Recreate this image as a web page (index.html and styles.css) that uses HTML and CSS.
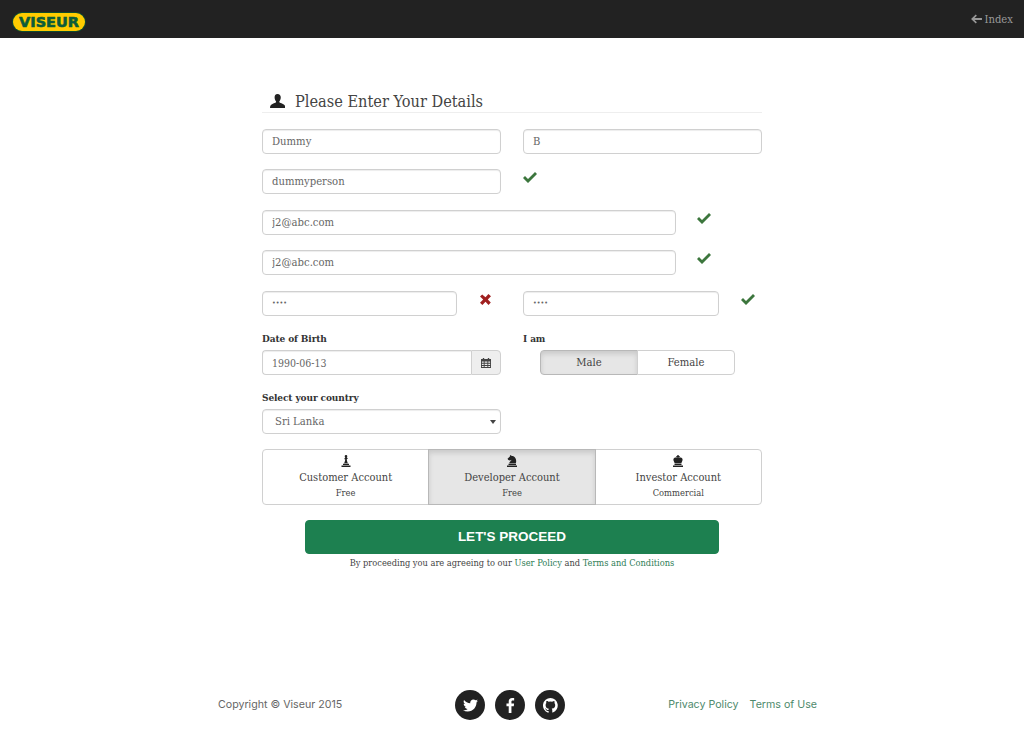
FILE: index.html
```html
<!DOCTYPE html>
<html lang="en">
<head>
<meta charset="utf-8">
<title>Viseur</title>
<link rel="stylesheet" href="styles.css">
</head>
<body>
<header class="topbar">
  <a class="logo"><span class="logo-text">VISEUR</span></a>
  <a class="index-link">
    <svg class="arrow" viewBox="0 0 12 11"><path d="M0 5.500 5.200.6 6.400 1.800 3.800 4.300H12v2.400H3.800l2.600 2.500-1.200 1.200z"/></svg>Index
  </a>
</header>
<main class="form">
  <h1 class="title">
    <svg class="user" viewBox="0 0 16 15"><path d="M8 0c2.300 0 3.500 1.600 3.500 3.800 0 1.500-.6 3-1.400 4-.4.6-.2 1.300.5 1.600 2.200.9 4.600 1.500 5.400 3.200.3.700.4 1.500.4 2.400H0c0-.9.100-1.700.4-2.400.8-1.700 3.200-2.300 5.400-3.200.7-.3.900-1 .5-1.600-.8-1-1.400-2.500-1.400-4C4.900 1.600 5.700 0 8 0z"/></svg>
    <span>Please Enter Your Details</span>
  </h1>
  <div class="row two">
    <input class="field" type="text" value="Dummy">
    <input class="field" type="text" value="B">
  </div>
  <div class="row two">
    <input class="field" type="text" value="dummyperson">
    <svg class="ok" viewBox="0 0 14 11"><path d="M0 6 2 4l3 3 7-7 2 2-9 9z"/></svg>
  </div>
  <div class="row wide">
    <input class="field" type="text" value="j2@abc.com">
    <svg class="ok" viewBox="0 0 14 11"><path d="M0 6 2 4l3 3 7-7 2 2-9 9z"/></svg>
  </div>
  <div class="row wide">
    <input class="field" type="text" value="j2@abc.com">
    <svg class="ok" viewBox="0 0 14 11"><path d="M0 6 2 4l3 3 7-7 2 2-9 9z"/></svg>
  </div>
  <div class="row passwords">
    <input class="field pw" type="password" value="1234">
    <svg class="bad" viewBox="0 0 11 11"><path d="M2.200.4 5.500 3.300 8.400 0 11 2.200 7.800 5.500 10.800 8.600 8.500 11 5.500 7.800 2.400 11 0 8.700 3.200 5.500 0 2.400z"/></svg>
    <input class="field pw" type="password" value="1234">
    <svg class="ok" viewBox="0 0 14 11"><path d="M0 6 2 4l3 3 7-7 2 2-9 9z"/></svg>
  </div>
  <div class="row two labelled">
    <div>
      <label class="label">Date of Birth</label>
      <div class="date-group">
        <input class="field date" type="text" value="1990-06-13">
        <span class="addon">
          <svg class="cal" viewBox="0 0 11 11"><path d="M2 0h1.500v1.200h4V0H9v1.200h2V11H0V1.200h2zM1 3.800v1.500h2V3.800zm3 0v1.500h3V3.800zm4 0v1.500h2V3.800zM1 6.200v1.600h2V6.200zm3 0v1.600h3V6.200zm4 0v1.600h2V6.200zM1 8.700v1.300h2V8.700zm3 0v1.300h3V8.700zm4 0v1.300h2V8.700z" fill-rule="evenodd"/></svg>
        </span>
      </div>
    </div>
    <div>
      <label class="label">I am</label>
      <div class="gender">
        <button class="seg active" type="button">Male</button>
        <button class="seg" type="button">Female</button>
      </div>
    </div>
  </div>
  <div class="row two labelled last">
    <div>
      <label class="label">Select your country</label>
      <div class="select-wrap">
        <select class="field country"><option>Sri Lanka</option></select>
      </div>
    </div>
  </div>
  <div class="accounts">
    <div class="account">
      <svg class="piece" viewBox="0 0 12 12"><path d="M6 0a1.300 1.300 0 0 1 1.300 1.300c0 .5-.3.9-.6 1.100L8 3.300 6.800 4.200c0 1.300.5 3 1.200 4H4c.7-1 1.200-2.700 1.200-4H4.400V3.400l.9-1c-.4-.2-.6-.6-.6-1.100A1.300 1.300 0 0 1 6 0zM3 8.800h6V10H3zM1.500 10.500h9V12h-9z"/></svg>
      <div class="acc-name">Customer Account</div>
      <div class="acc-price">Free</div>
    </div>
    <div class="account active">
      <svg class="piece" viewBox="0 0 12 12"><path d="M4 0l2 1c2.800 0 4.200 2.700 4.200 5.200 0 .9-.2 1.700-.5 2.100H3.200c.2-1.400 1.700-2.200 2.400-3.500-1 .6-1.600.8-2.400.4L2.300 5l-.8-1.200L3.900 1.500zM2.500 8.800h7.500V10H2.500zM1 10.500h10V12H1z"/></svg>
      <div class="acc-name">Developer Account</div>
      <div class="acc-price">Free</div>
    </div>
    <div class="account">
      <svg class="piece" viewBox="0 0 12 12"><path d="M5.300 0h1.400v1h1v1.200h-1v.8c.9-.5 2.100-.6 3 0 1 .7 1.100 1.900.6 2.900L9.300 8.300H2.700L1.700 5.900c-.5-1-.4-2.200.6-2.900.9-.6 2.100-.5 3 0v-.8h-1V1h1zM2.500 8.800h7V10h-7zM1 10.500h10V12H1z"/></svg>
      <div class="acc-name">Investor Account</div>
      <div class="acc-price">Commercial</div>
    </div>
  </div>
  <div class="actions">
    <button class="proceed" type="button">LET'S PROCEED</button>
    <p class="terms">By proceeding you are agreeing to our <a>User Policy</a> and <a>Terms and Conditions</a></p>
  </div>
</main>
<footer class="footer">
  <span class="copy">Copyright © Viseur 2015</span>
  <div class="social">
    <a class="circle"><svg viewBox="0 0 16 13"><path d="M16 1.500c-.6.300-1.200.4-1.900.5.700-.4 1.200-1 1.400-1.800-.6.400-1.300.6-2.100.8C12.800.300 12 0 11 0 9.200 0 7.700 1.500 7.700 3.300c0 .3 0 .5.100.8C5.100 4 2.600 2.700 1.100.6.800 1.100.700 1.600.700 2.200c0 1.100.6 2.100 1.500 2.700-.5 0-1-.2-1.500-.4 0 1.600 1.100 2.900 2.600 3.200-.5.200-1 .2-1.500.1.400 1.300 1.600 2.200 3.100 2.300C3.500 11.300 1.500 11.800 0 11.600 1.500 12.500 3.200 13 5 13c6 0 9.400-5 9.400-9.400v-.4c.6-.5 1.200-1 1.600-1.700z"/></svg></a>
    <a class="circle"><svg viewBox="0 0 9 16"><path d="M8.400.1v2.600H6.900c-1.200 0-1.400.6-1.400 1.400v1.800h2.800L8 8.700H5.500V16H2.600V8.700H.2V5.900h2.400V3.800C2.600 1.400 4 0 6.200 0c1 0 1.800.1 2.200.1z"/></svg></a>
    <a class="circle"><svg viewBox="0 0 16 16"><path d="M8 0a8 8 0 0 0-2.500 15.600c.4.100.5-.2.500-.4v-1.400c-2.200.5-2.700-1-2.700-1-.4-.9-.9-1.200-.9-1.200-.7-.5.100-.5.100-.5.800.1 1.200.8 1.200.8.700 1.200 1.900.9 2.300.7.100-.5.300-.9.500-1.100-1.800-.2-3.700-.9-3.700-4 0-.9.300-1.600.8-2.100-.1-.2-.4-1 .1-2.100 0 0 .7-.2 2.200.8a7.600 7.600 0 0 1 4 0c1.500-1 2.200-.8 2.200-.8.400 1.100.2 1.900.1 2.100.5.600.8 1.300.8 2.100 0 3.100-1.900 3.700-3.700 3.900.3.300.6.700.6 1.500v2.200c0 .2.100.5.600.4A8 8 0 0 0 8 0z"/></svg></a>
  </div>
  <nav class="links"><a>Privacy Policy</a><a>Terms of Use</a></nav>
</footer>
</body>
</html>
```
FILE: styles.css
```css
* { box-sizing: border-box; }
html, body { margin: 0; padding: 0; }
body {
  background: #fff;
  color: #444;
  font-family: "DejaVu Serif Condensed", "DejaVu Serif", serif;
  font-size: 11.200px;
  height: 738px;
  overflow: hidden;
}
.topbar {
  height: 38px;
  background: #222;
  display: flex;
  align-items: center;
  justify-content: space-between;
  padding: 0 11px 0 13px;
}
.logo {
  width: 72px;
  height: 18px;
  margin-top: 6px;
  background: #fc0;
  border-radius: 9px;
  box-shadow: 0 0 0 1px #0d4a30;
  display: flex;
  align-items: center;
  justify-content: center;
}
.logo-text {
  font-family: "DejaVu Sans", sans-serif;
  font-weight: 700;
  font-size: 14.500px;
  line-height: 18px;
  color: #0d5c3a;
  -webkit-text-stroke: .6px #0d5c3a;
}
.index-link {
  color: #999;
  font-size: 11.200px;
  display: flex;
  align-items: center;
  gap: 2px;
}
.arrow { width: 11px; height: 10px; fill: #999; }
.form { width: 500px; margin: 0 auto; }
.title {
  margin: 0 0 15.700px;
  height: 75px;
  padding: 54px 0 0 8px;
  border-bottom: 1px solid #eee;
  font-size: 16.200px;
  font-weight: 400;
  line-height: 19px;
  color: #444;
  display: flex;
  align-items: flex-start;
  gap: 10px;
}
.user { width: 15px; height: 14px; margin-top: 2px; fill: #222; }
.row { display: flex; align-items: flex-start; margin-bottom: 15.500px; }
.row .field { height: 25px; }
.two { display: grid; grid-template-columns: 239px 239px; column-gap: 22px; }
.wide .field { width: 414px; margin-right: 21px; }
.passwords { display: grid; grid-template-columns: 195px 66px 196px 1fr; }
.passwords .bad { margin: 3px 0 0 23px; }
.passwords .ok { margin-left: 22px; }
.field {
  border: 1px solid #d0d0d0;
  border-radius: 4px;
  background: #fff;
  color: #666;
  font-family: inherit;
  font-size: 11.200px;
  padding: 0 9px;
  width: 100%;
  outline: none;
  box-shadow: inset 0 1px 1px rgba(0,0,0,.075);
}
.field.pw { font-size: 7px; }
.ok { width: 14px; height: 11px; margin-top: 3px; fill: #3c763d; }
.bad { width: 11px; height: 11px; fill: #a02020; flex: none; }
.labelled { margin-bottom: 14.500px; }
.label {
  display: block;
  font-weight: 700;
  font-size: 10px;
  letter-spacing: -.1px;
  line-height: 14px;
  padding-top: 1px;
  margin-bottom: 4px;
  color: #333;
}
.date-group { display: flex; height: 25px; }
.field.date { border-radius: 4px 0 0 4px; border-right: 0; flex: 1; font-size: 10.500px; }
.addon {
  width: 30px;
  border: 1px solid #d0d0d0;
  border-radius: 0 4px 4px 0;
  background: #eee;
  display: flex;
  align-items: center;
  justify-content: center;
}
.cal { width: 10px; height: 10px; fill: #444; }
.gender { display: flex; margin-left: 17px; width: 195px; height: 25px; }
.seg {
  flex: 1;
  font-family: inherit;
  font-size: 11.200px;
  color: #444;
  background: #fff;
  border: 1px solid #d0d0d0;
  padding: 0;
}
.seg:first-child { border-radius: 4px 0 0 4px; }
.seg:last-child { border-radius: 0 4px 4px 0; margin-left: -1px; }
.seg.active {
  background: #e6e6e6;
  border-color: #b8b8b8;
  box-shadow: inset 0 3px 5px rgba(0,0,0,.125);
}
.select-wrap { position: relative; height: 25px; }
.select-wrap::after {
  content: "";
  position: absolute;
  right: 5px;
  top: 11px;
  border: 3px solid transparent;
  border-top: 4px solid #444;
  border-bottom: 0;
}
.country { height: 25px; padding-left: 12px; appearance: none; -webkit-appearance: none; }
.last { margin-bottom: 15px; }
.accounts { display: flex; height: 56px; }
.account {
  flex: 1;
  border: 1px solid #d0d0d0;
  margin-left: -1px;
  background: #fff;
  text-align: center;
  padding-top: 5px;
  color: #444;
}
.account:first-child { margin-left: 0; border-radius: 4px 0 0 4px; }
.account:last-child { border-radius: 0 4px 4px 0; }
.account.active {
  background: #e6e6e6;
  border-color: #b8b8b8;
  box-shadow: inset 0 3px 5px rgba(0,0,0,.125);
  position: relative;
}
.piece { display: block; width: 12px; height: 12px; margin: 0 auto 3px; fill: #222; }
.acc-name { font-size: 11px; line-height: 16px; }
.acc-price { font-size: 9.300px; line-height: 14px; }
.actions { text-align: center; margin-top: 15px; }
.proceed {
  display: block;
  width: 414px;
  height: 34px;
  margin: 0 auto;
  border: 1px solid #1d8050;
  border-radius: 4px;
  background: #1d8050;
  color: #fff;
  font-family: "Liberation Sans", sans-serif;
  font-weight: 700;
  font-size: 13.500px;
}
.terms { margin: 2px 0 0; font-size: 9.200px; line-height: 14px; color: #444; }
.terms a { color: #2e7d56; }
.footer {
  position: absolute;
  left: 218px;
  top: 690px;
  width: 599px;
  display: grid;
  grid-template-columns: 237px 110px 1fr;
  align-items: center;
  font-family: "Inter", sans-serif;
  font-size: 10.650px;
  height: 30px;
  color: #666;
}
.copy, .links { padding-bottom: 2px; }
.social { display: flex; gap: 10px; }
.circle {
  width: 30px;
  height: 30px;
  border-radius: 50%;
  background: #222;
  display: flex;
  align-items: center;
  justify-content: center;
}
.circle svg { width: 15px; height: 15px; fill: #fff; }
.links { display: flex; justify-content: flex-end; gap: 11px; color: #4e8a6c; }
```
